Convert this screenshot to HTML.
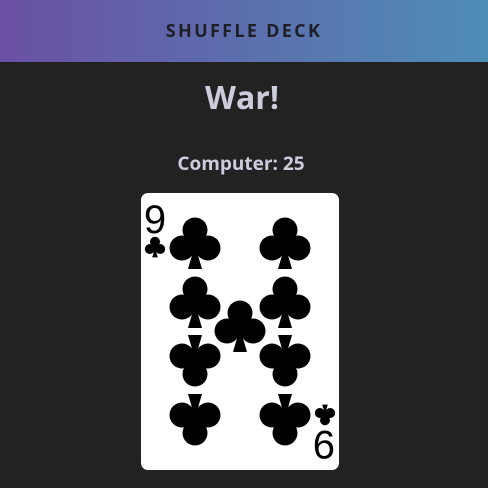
<!DOCTYPE html>
<html><head><meta charset="utf-8"><style>
html,body{margin:0;padding:0;width:488px;height:488px;background:#222;overflow:hidden;font-family:"Open Sans","DejaVu Sans","Liberation Sans",sans-serif}
.hdr{height:62px;background:linear-gradient(90deg,#6a50a4,#4e8db6);display:flex;align-items:center;justify-content:center;color:#1e1e26;font-weight:bold;font-size:18px;letter-spacing:2.3px}
h1{position:absolute;top:76px;left:0;width:484px;text-align:center;margin:0;color:#ccd;font-size:32px;font-weight:bold}
.sc{position:absolute;top:150px;left:0;width:482px;text-align:center;color:#ccd;font-size:19px;font-weight:bold}
.card{position:absolute;left:141px;top:193px;width:198px;height:277px;background:#fff;border-radius:7px}
</style></head><body>
<div class="hdr">SHUFFLE DECK</div>
<h1>War!</h1>
<div class="sc">Computer: 25</div>
<div class="card"></div>
<svg width="488" height="488" style="position:absolute;left:0;top:0">
<defs><g id="c"><circle cx="0" cy="-13" r="12.5"/><circle cx="-13" cy="5" r="12.5"/><circle cx="13" cy="5" r="12.5"/><rect x="-4" y="-6" width="8" height="14"/><path d="M0 2 L-7 26 L7 26 Z"/></g></defs>
<g fill="#000">
<use href="#c" transform="translate(195,243)"/>
<use href="#c" transform="translate(285,243)"/>
<use href="#c" transform="translate(195,302)"/>
<use href="#c" transform="translate(285,302)"/>
<use href="#c" transform="translate(240,326)"/>
<use href="#c" transform="translate(195,361) rotate(180)"/>
<use href="#c" transform="translate(285,361) rotate(180)"/>
<use href="#c" transform="translate(195,420) rotate(180)"/>
<use href="#c" transform="translate(285,420) rotate(180)"/>
<use href="#c" transform="translate(155,247) scale(0.4)"/>
<use href="#c" transform="translate(325,415) rotate(180) scale(0.4)"/>
<text x="155" y="233" font-family="Liberation Sans,sans-serif" font-size="40" text-anchor="middle">9</text>
<text x="324" y="459" font-family="Liberation Sans,sans-serif" font-size="40" text-anchor="middle" transform="rotate(180 324 445)">9</text>
</g></svg>
</body></html>
